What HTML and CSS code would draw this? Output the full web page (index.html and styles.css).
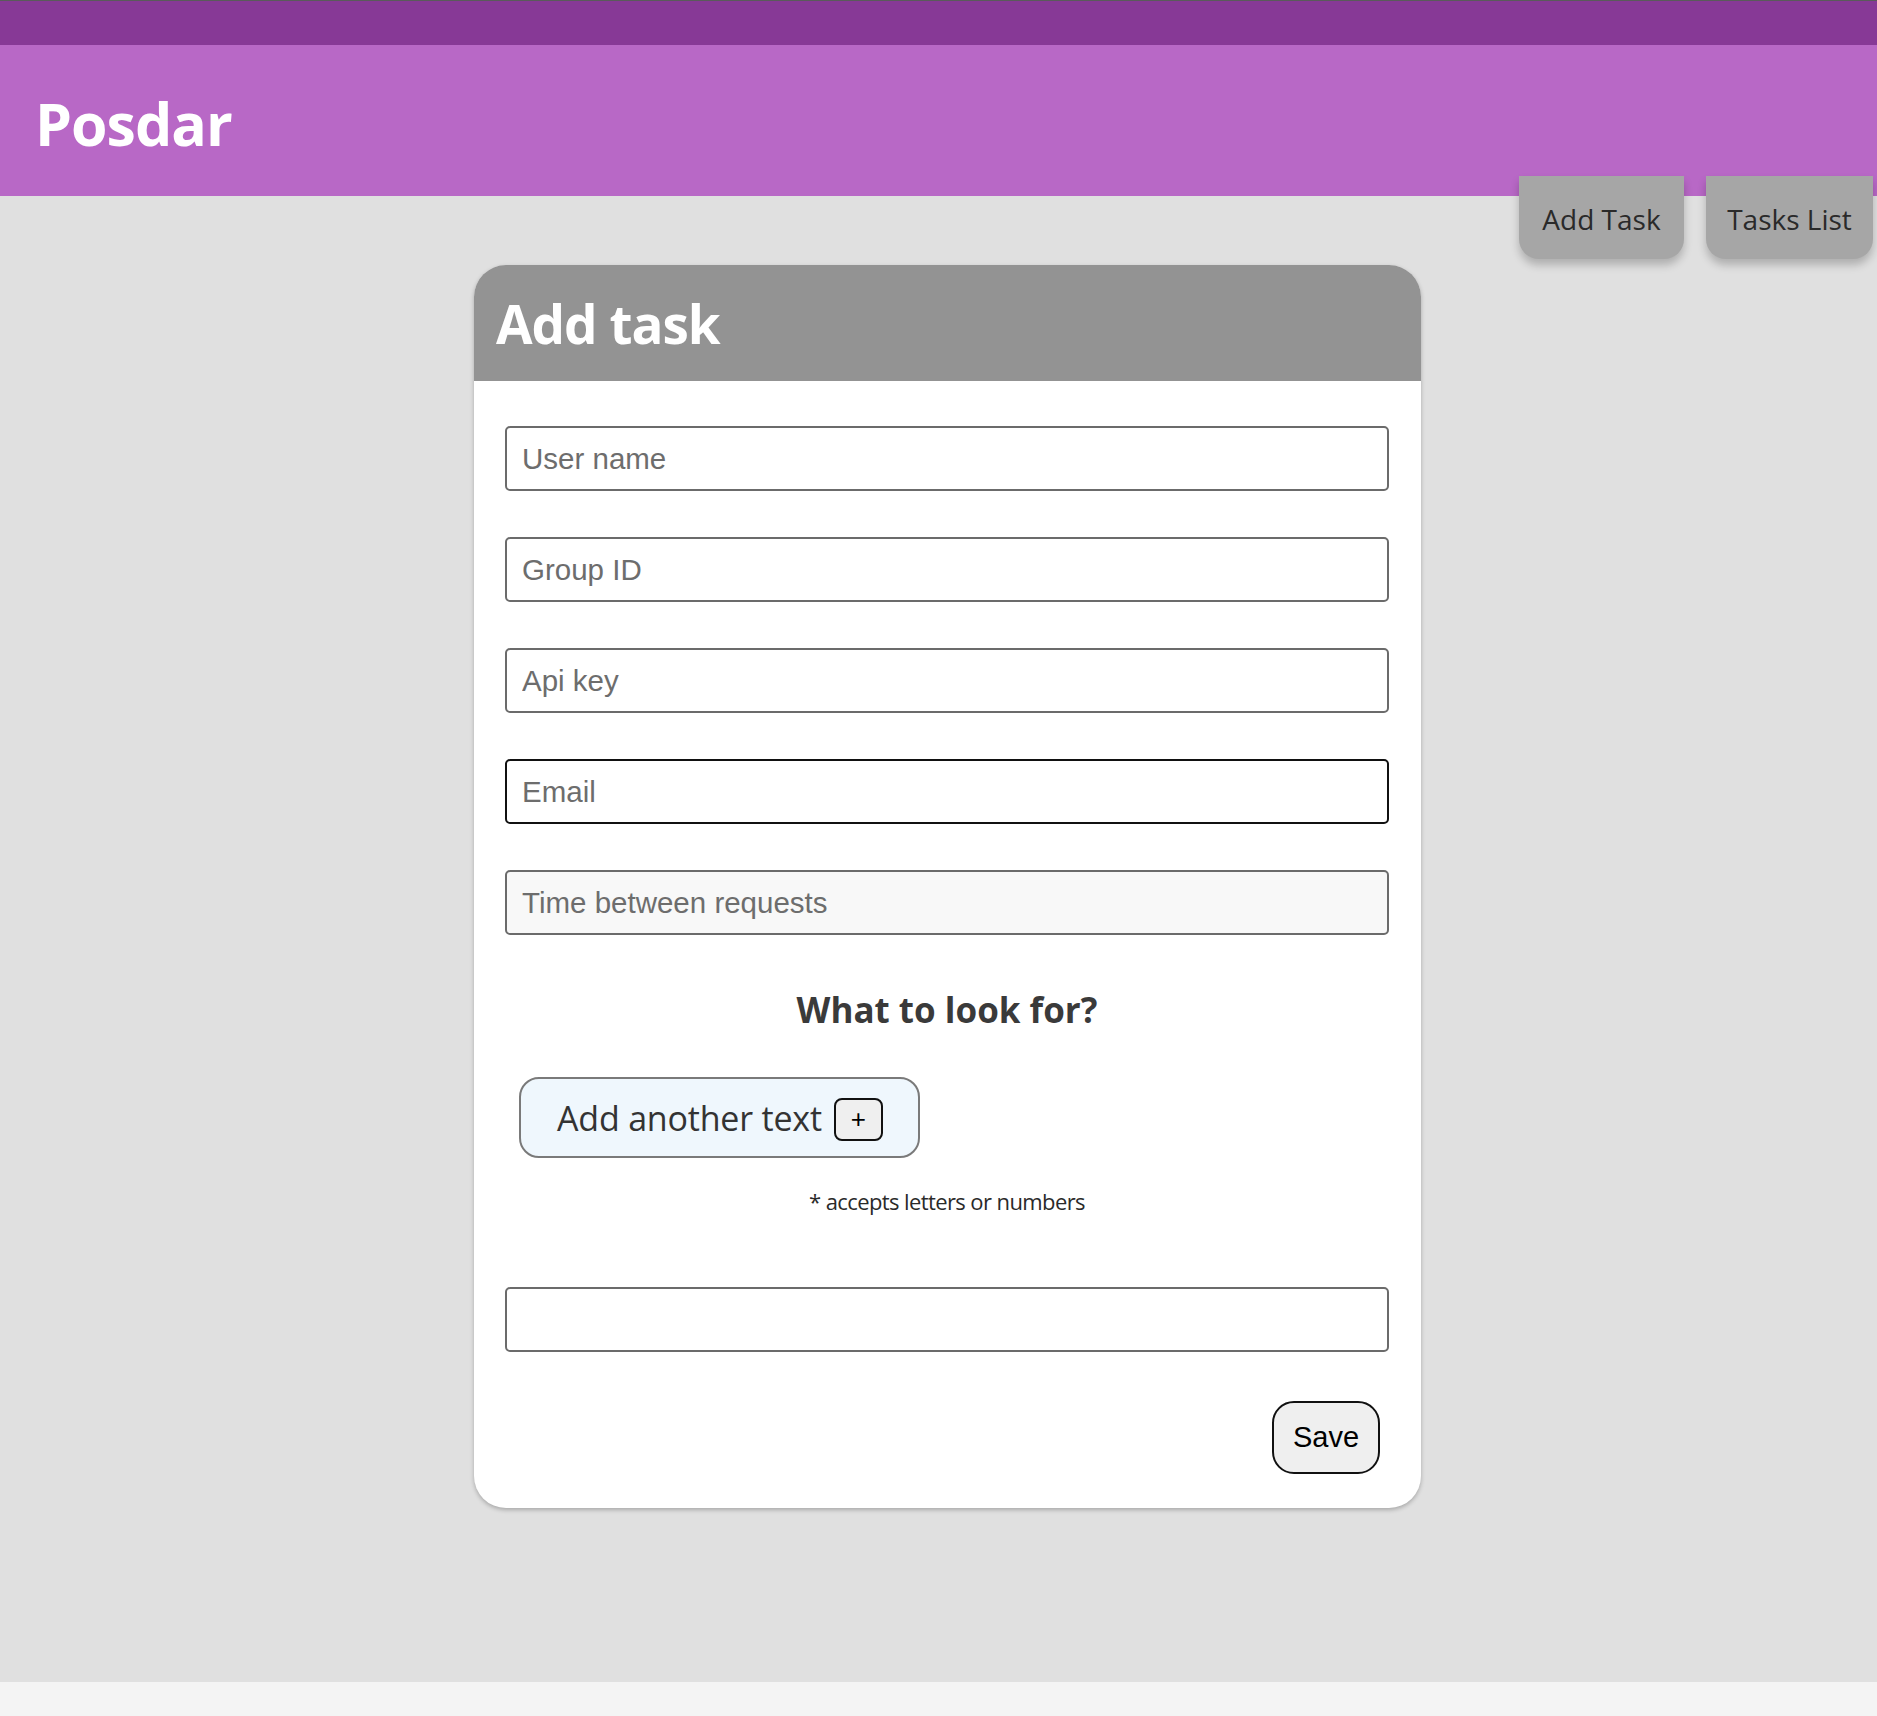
FILE: index.html
```html
<!DOCTYPE html>
<html lang="en">
<head>
<meta charset="utf-8">
<title>Posdar</title>
<link rel="stylesheet" href="styles.css">
</head>
<body>
<div class="topbar"></div>
<header class="header">
  <h1 class="brand">Posdar</h1>
  <nav class="nav">
    <a class="nav-btn nav-add">Add Task</a>
    <a class="nav-btn nav-list">Tasks List</a>
  </nav>
</header>
<main class="main">
  <section class="card">
    <div class="card-head"><h2 class="card-title">Add task</h2></div>
    <form class="card-body">
      <input class="field" type="text" placeholder="User name">
      <input class="field" type="text" placeholder="Group ID">
      <input class="field" type="text" placeholder="Api key">
      <input class="field field-focus" type="text" placeholder="Email">
      <input class="field field-muted" type="text" placeholder="Time between requests">
      <h3 class="look-title">What to look for?</h3>
      <div class="add-row">
        <button type="button" class="add-btn">Add another text <span class="plus">+</span></button>
      </div>
      <p class="hint">* accepts letters or numbers</p>
      <input class="field field-text" type="text">
      <div class="save-row">
        <button type="button" class="save-btn">Save</button>
      </div>
    </form>
  </section>
</main>
<div class="footer-strip"></div>
</body>
</html>
```
FILE: styles.css
```css
* { box-sizing: border-box; }
html, body { margin: 0; padding: 0; }
body {
  background: #f4f4f4;
  font-family: "Open Sans", "Noto Sans", sans-serif;
  width: 1877px;
}
.topbar {
  height: 45px;
  background: #873996;
  border-top: 1px solid #5a5a5a;
}
.header {
  position: relative;
  height: 151px;
  background: #b868c6;
  display: flex;
  align-items: center;
}
.brand {
  margin: 0 0 0 35px;
  color: #fff;
  font-size: 59px;
  font-weight: 700;
  letter-spacing: -1px;
  line-height: 1;
  padding-top: 6px;
}
.nav {
  position: absolute;
  right: 4px;
  top: 131px;
  display: flex;
  gap: 22px;
  z-index: 2;
}
.nav-btn {
  display: flex;
  align-items: center;
  justify-content: center;
  height: 83px;
  background: #a6a6a6;
  color: #2a2a2a;
  font-size: 28px;
  border-radius: 0 0 20px 20px;
  box-shadow: 0 6px 8px rgba(0,0,0,0.22);
  padding-top: 3px;
}
.nav-add { width: 165px; }
.nav-list { width: 167px; }
.main {
  background: #e0e0e0;
  height: 1486px;
  padding: 69px 0 0 18px;
}
.card {
  width: 947px;
  margin: 0 auto;
  background: #fff;
  border-radius: 32px;
  overflow: hidden;
  box-shadow: 0 2px 4px rgba(0,0,0,0.25);
}
.card-head {
  height: 116px;
  background: #939393;
  display: flex;
  align-items: center;
  padding-left: 22px;
}
.card-title {
  margin: 0;
  color: #fff;
  font-size: 53px;
  font-weight: 700;
  letter-spacing: -1px;
  line-height: 1;
}
.card-body {
  display: flex;
  flex-direction: column;
  padding: 45px 32px 34px 31px;
}
.field {
  height: 65px;
  width: 884px;
  border: 2px solid #6b6b6b;
  border-radius: 5px;
  background: #fff;
  font-family: "Liberation Sans", Arial, sans-serif;
  font-size: 29.5px;
  padding: 0 15px;
  margin: 0 0 46px 0;
  color: #222;
}
.field::placeholder { color: #6d6d6d; }
.field-focus { border-color: #111; }
.field-muted { background: #f8f8f8; margin-bottom: 0; }
.look-title {
  margin: 54px 0 0 0;
  text-align: center;
  font-size: 35px;
  font-weight: 700;
  color: #3a3a3a;
  line-height: 1.2;
}
.add-row {
  display: flex;
  padding-left: 14px;
  margin-top: 46px;
}
.add-btn {
  width: 401px;
  height: 81px;
  background: #eff7fd;
  border: 2px solid #7a7a7a;
  border-radius: 20px;
  font-family: "Open Sans", "Noto Sans", sans-serif;
  font-size: 34px;
  color: #333;
  display: flex;
  align-items: center;
  justify-content: flex-start;
  gap: 12px;
  padding: 0 0 0 36px;
  letter-spacing: -0.2px;
}
.plus {
  display: inline-flex;
  align-items: center;
  justify-content: center;
  width: 49px;
  height: 43px;
  border: 2px solid #111;
  border-radius: 8px;
  background: #efefef;
  color: #000;
  font-family: "Liberation Sans", Arial, sans-serif;
  font-size: 26px;
  margin-top: 4px;
}
.hint {
  margin: 28px 0 0 0;
  text-align: center;
  font-size: 22px;
  letter-spacing: -0.6px;
  color: #2a2a2a;
}
.field-text { margin: 71px 0 0 0; }
.save-row {
  display: flex;
  justify-content: flex-end;
  padding-right: 9px;
  margin-top: 49px;
}
.save-btn {
  width: 108px;
  height: 73px;
  background: #efefef;
  border: 2px solid #111;
  border-radius: 22px;
  font-family: "Liberation Sans", Arial, sans-serif;
  font-size: 29px;
  color: #000;
  padding: 0;
}
.footer-strip { height: 34px; background: #f4f4f4; }
```
